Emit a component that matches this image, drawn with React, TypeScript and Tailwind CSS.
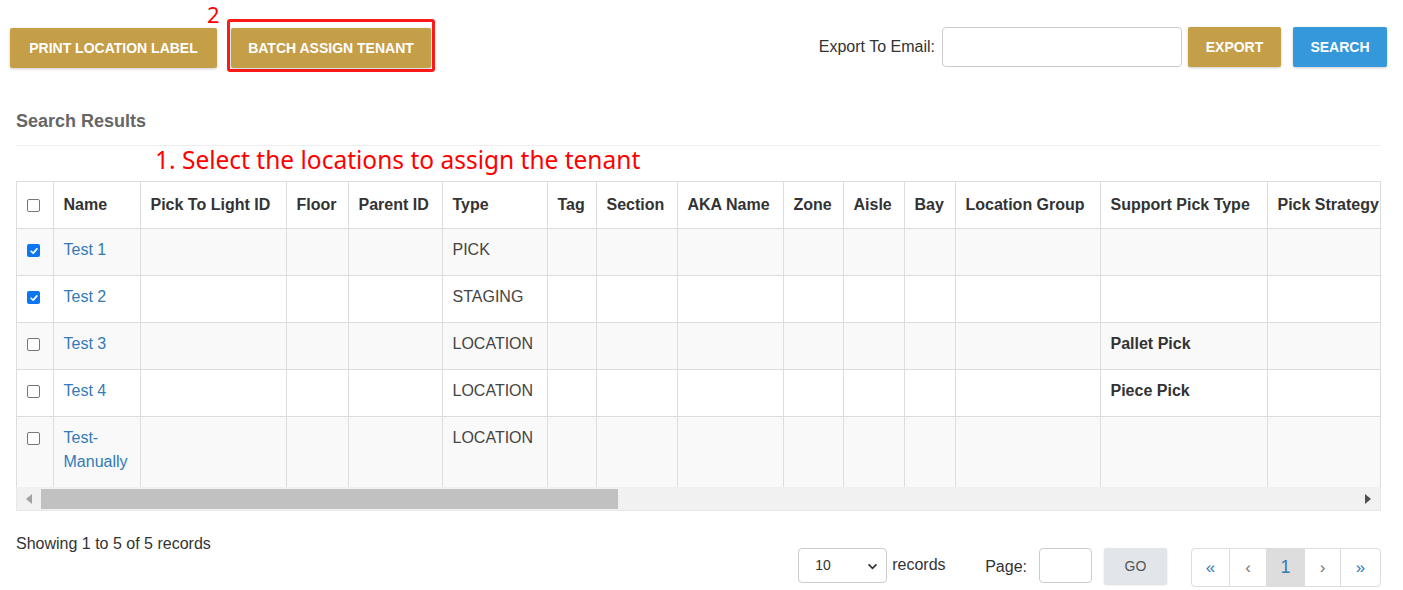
import React from 'react';

const columns: { label: string; w: number }[] = [
  { label: 'Name', w: 87 },
  { label: 'Pick To Light ID', w: 146 },
  { label: 'Floor', w: 62 },
  { label: 'Parent ID', w: 94 },
  { label: 'Type', w: 105 },
  { label: 'Tag', w: 49 },
  { label: 'Section', w: 81 },
  { label: 'AKA Name', w: 106 },
  { label: 'Zone', w: 60 },
  { label: 'Aisle', w: 61 },
  { label: 'Bay', w: 51 },
  { label: 'Location Group', w: 145 },
  { label: 'Support Pick Type', w: 167 },
  { label: 'Pick Strategy', w: 140 },
  { label: 'Tenant', w: 120 },
];

const rows = [
  { name: 'Test 1', type: 'PICK', pick: '', checked: true },
  { name: 'Test 2', type: 'STAGING', pick: '', checked: true },
  { name: 'Test 3', type: 'LOCATION', pick: 'Pallet Pick', checked: false },
  { name: 'Test 4', type: 'LOCATION', pick: 'Piece Pick', checked: false },
  { name: 'Test-Manually', type: 'LOCATION', pick: '', checked: false },
];

function Checkbox({ checked }: { checked: boolean }) {
  if (checked) {
    return (
      <span className="flex h-[13px] w-[13px] items-center justify-center rounded-[2px] bg-[#0b75f2]">
        <svg viewBox="0 0 12 12" className="h-[10px] w-[10px]" fill="none" stroke="white" strokeWidth="2" strokeLinecap="round" strokeLinejoin="round">
          <polyline points="2.5 6.3 5 8.6 9.5 3.4" />
        </svg>
      </span>
    );
  }
  return <span className="block h-[13px] w-[13px] rounded-[2px] border border-[#767676] bg-white" />;
}

function GoldButton({ children, className = '' }: { children: React.ReactNode; className?: string }) {
  return (
    <button
      className={`h-10 rounded-[2px] bg-[#c59e48] text-[14px] font-bold uppercase text-white shadow-[0_1px_3px_rgba(0,0,0,0.2)] ${className}`}
    >
      {children}
    </button>
  );
}

export default function App() {
  return (
    <div className="min-h-[590px] bg-white font-['Liberation_Sans',Arial,sans-serif] text-[16px] text-[#333]">
      {/* toolbar */}
      <div className="flex items-start pl-[10px] pr-[16px] pt-[27px]">
        <GoldButton className="mt-px w-[207px]">Print Location Label</GoldButton>
        <div className="relative ml-[10px] mt-[-8px]">
          <span className="absolute left-[-20px] top-[-16px] font-['Noto_Sans',sans-serif] text-[22px] leading-none text-[#ff0000]">2</span>
          <div className="rounded-[3px] border-[3px] border-[#ff1a1a] px-[1px] pb-px pt-[6px]">
            <GoldButton className="w-[200px]">Batch Assign Tenant</GoldButton>
          </div>
        </div>
        <div className="ml-auto flex items-start">
          <span className="mr-[7px] mt-[8px] text-[16px] text-[#333]">Export To Email:</span>
          <input className="h-10 w-[240px] rounded-[4px] border border-[#ccc] bg-white" />
          <GoldButton className="ml-[6px] w-[93px]">Export</GoldButton>
          <button className="ml-[12px] h-10 w-[94px] rounded-[2px] bg-[#3498db] text-[14px] font-bold text-white shadow-[0_1px_3px_rgba(0,0,0,0.2)]">
            SEARCH
          </button>
        </div>
      </div>

      {/* results */}
      <div className="ml-[16px] mr-[22px] mt-[38px]">
        <h2 className="text-[18px] font-bold leading-[22px] text-[#666]">Search Results</h2>
        <div className="mt-[13px] border-t border-[#eee]" />
        <div className="h-[35px] pl-[139px] font-['Noto_Sans',sans-serif] text-[24.5px] leading-[28px] text-[#ff0000]">
          1. Select the locations to assign the tenant
        </div>

        <div className="overflow-hidden border border-[#ddd] border-b-0">
          <table className="table-fixed border-collapse" style={{ width: 36 + columns.reduce((s, c) => s + c.w, 0) }}>
            <colgroup>
              <col style={{ width: 36 }} />
              {columns.map((c) => (
                <col key={c.label} style={{ width: c.w }} />
              ))}
            </colgroup>
            <thead>
              <tr className="bg-white">
                <th className="border-r border-[#ddd] px-[10px] py-[11px] text-left align-middle">
                  <Checkbox checked={false} />
                </th>
                {columns.map((c) => (
                  <th
                    key={c.label}
                    className="whitespace-nowrap border-r border-[#ddd] px-[10px] py-[11px] text-left text-[16px] font-bold leading-[24px] text-[#333]"
                  >
                    {c.label}
                  </th>
                ))}
              </tr>
            </thead>
            <tbody>
              {rows.map((r, i) => (
                <tr key={r.name} className={i % 2 === 0 ? 'bg-[#f9f9f9]' : 'bg-white'}>
                  <td className="border-r border-t border-[#ddd] px-[10px] pb-[13px] pt-[15px] align-top">
                    <Checkbox checked={r.checked} />
                  </td>
                  {columns.map((c, ci) => (
                    <td
                      key={c.label}
                      className="border-r border-t border-[#ddd] px-[10px] pb-[13px] pt-[9px] align-top leading-[24px]"
                    >
                      {ci === 0 && <a className="text-[#337ab7]">{r.name}</a>}
                      {ci === 4 && <span className="text-[#444]">{r.type}</span>}
                      {ci === 12 && r.pick && <span className="font-bold text-[#333]">{r.pick}</span>}
                    </td>
                  ))}
                </tr>
              ))}
            </tbody>
          </table>
        </div>

        {/* horizontal scrollbar */}
        <div className="flex h-[24px] items-center border border-t-0 border-[#e8e8e8] bg-[#f1f1f1]">
          <span className="flex w-[24px] justify-center">
            <svg viewBox="0 0 6 10" className="h-[10px] w-[6px]" fill="#a3a3a3">
              <polygon points="6,0 0,5 6,10" />
            </svg>
          </span>
          <div className="h-[20px] w-[577px] bg-[#c1c1c1]" />
          <span className="ml-auto flex w-[24px] justify-center">
            <svg viewBox="0 0 6 10" className="h-[10px] w-[6px]" fill="#505050">
              <polygon points="0,0 6,5 0,10" />
            </svg>
          </span>
        </div>

        {/* footer */}
        <div className="mt-[22px] flex items-start">
          <span className="leading-[22px] text-[#333]">Showing 1 to 5 of 5 records</span>
          <div className="ml-auto mt-[15px] flex items-start">
            <div className="relative flex h-[35px] w-[89px] items-center rounded-[4px] border border-[#ccc] bg-white pl-[16px] text-[14px] text-[#333]">
              10
              <svg viewBox="0 0 12 8" className="absolute right-[8px] top-[14px] h-[7px] w-[11px]" fill="none" stroke="#333" strokeWidth="2">
                <polyline points="1.5 1.5 6 6 10.5 1.5" />
              </svg>
            </div>
            <span className="ml-[5px] mt-[5px] w-[56px] text-[16px] text-[#333]">records</span>
            <span className="ml-[37px] mt-[7px] text-[16px] text-[#333]">Page:</span>
            <input className="ml-[12px] h-[35px] w-[53px] rounded-[4px] border border-[#ccc] bg-white" />
            <button className="ml-[12px] h-[36px] w-[63px] rounded-[2px] bg-[#e2e6ea] text-[14px] text-[#555] shadow-[0_1px_2px_rgba(0,0,0,0.15)]">
              GO
            </button>
            <div className="ml-[24px] flex h-[39px] overflow-hidden rounded-[4px] border border-[#ddd] text-[16px]">
              <span className="flex w-[38px] items-center justify-center border-r border-[#ddd] text-[17px] text-[#337ab7]">«</span>
              <span className="flex w-[37px] items-center justify-center border-r border-[#ddd] text-[17px] text-[#777]">‹</span>
              <span className="flex w-[38px] items-center justify-center border-r border-[#ddd] bg-[#ddd] text-[18px] text-[#337ab7]">1</span>
              <span className="flex w-[36px] items-center justify-center border-r border-[#ddd] text-[17px] text-[#777]">›</span>
              <span className="flex w-[39px] items-center justify-center text-[17px] text-[#337ab7]">»</span>
            </div>
          </div>
        </div>
      </div>
    </div>
  );
}
